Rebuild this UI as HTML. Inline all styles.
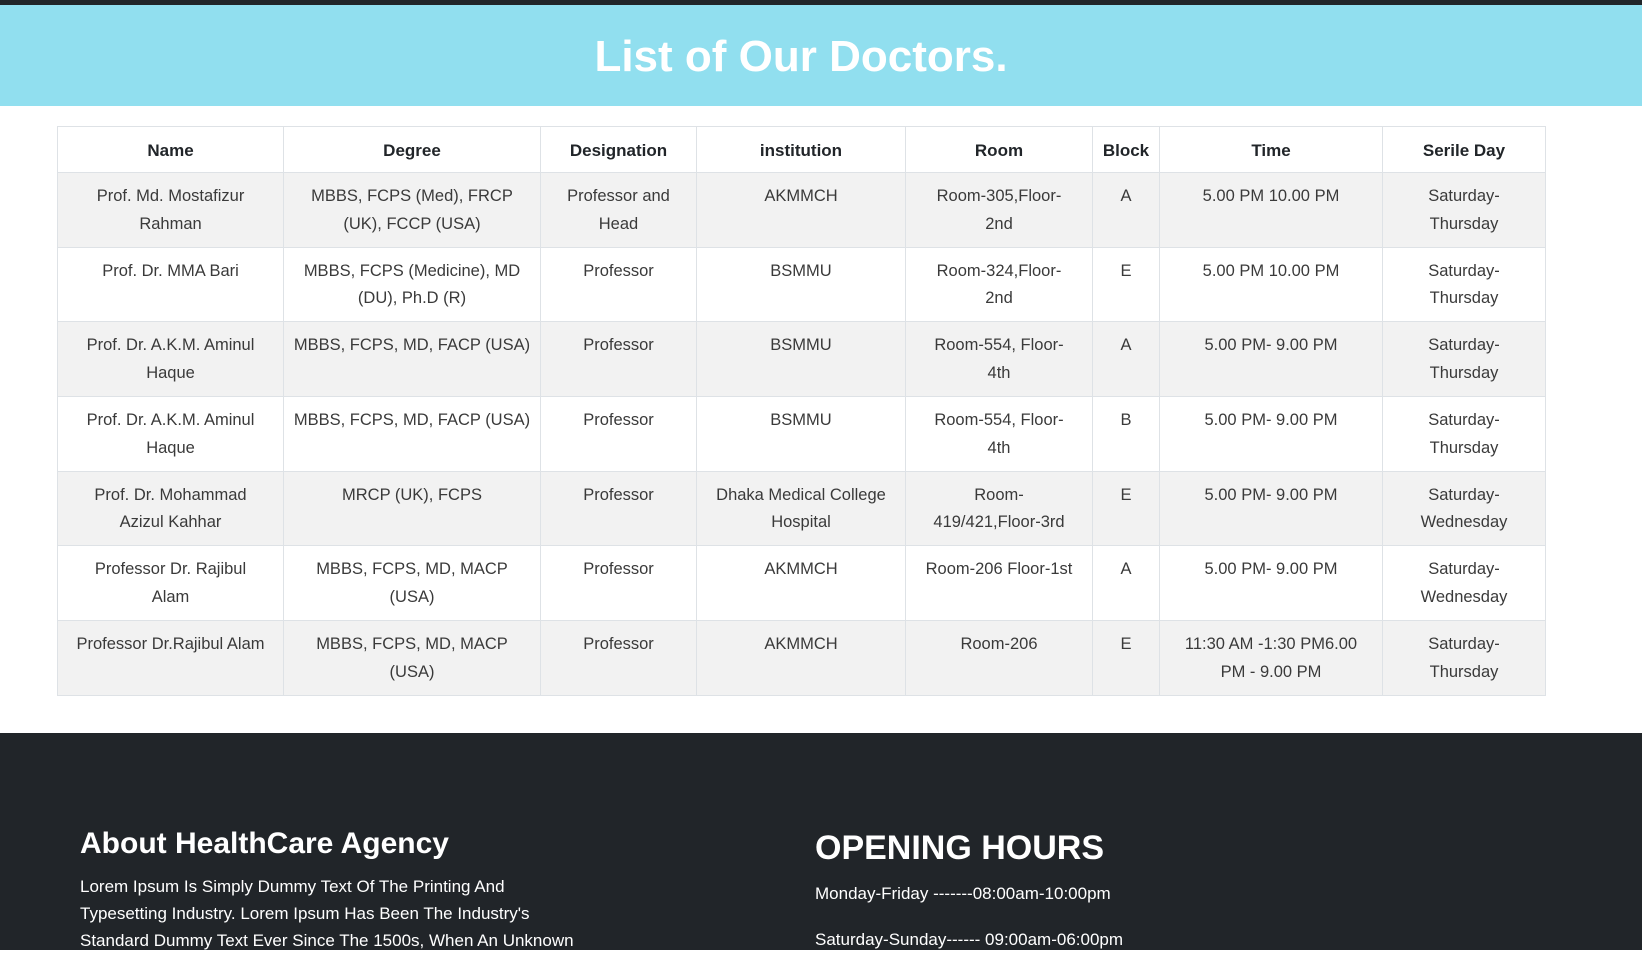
<!DOCTYPE html>
<html><head><meta charset="utf-8"><style>
*{margin:0;padding:0;box-sizing:border-box}
html,body{width:1642px;height:950px;overflow:hidden;background:#fff;font-family:"Liberation Sans",sans-serif}
.top{height:5px;background:#212529}
.band{height:101px;background:#91dfef;color:#fff;font-size:44px;line-height:104px;font-weight:bold;position:relative}
.band span{position:absolute;left:0;width:1602px;text-align:center}
table{position:absolute;left:57px;top:126px;width:1488px;border-collapse:collapse;table-layout:fixed}
td,th{border:1px solid #dee2e6;text-align:center;vertical-align:top;white-space:nowrap;font-size:16.5px;line-height:27.7px;color:#3a3a3a;padding:10px 0 0}
th{color:#212529;font-weight:bold;height:46px;vertical-align:middle;padding:2px 0 0;font-size:17px}
td{height:74.7px}
tbody tr:nth-child(odd){background:#f2f2f2}
.foot{position:absolute;left:0;top:733px;width:1642px;height:217px;background:#212529;color:#fff}
.h1{position:absolute;left:80px;top:94px;font-size:30px;font-weight:bold}
.h2{position:absolute;left:815px;top:96px;font-size:34px;font-weight:bold}
.p{position:absolute;left:80px;top:140px;font-size:17px;line-height:27px}
.q{position:absolute;left:815px;top:138px;font-size:17px;line-height:46px}
</style></head><body>
<div class="top"></div>
<div class="band"><span>List of Our Doctors.</span></div>
<table>
<colgroup><col style="width:226px"><col style="width:257px"><col style="width:156px"><col style="width:209px"><col style="width:187px"><col style="width:67px"><col style="width:223px"><col style="width:163px"></colgroup>
<thead><tr><th>Name</th><th>Degree</th><th>Designation</th><th>institution</th><th>Room</th><th>Block</th><th>Time</th><th>Serile Day</th></tr></thead>
<tbody>
<tr><td>Prof. Md. Mostafizur<br>Rahman</td><td>MBBS, FCPS (Med), FRCP<br>(UK), FCCP (USA)</td><td>Professor and<br>Head</td><td>AKMMCH</td><td>Room-305,Floor-<br>2nd</td><td>A</td><td>5.00 PM 10.00 PM</td><td>Saturday-<br>Thursday</td></tr>
<tr><td>Prof. Dr. MMA Bari</td><td>MBBS, FCPS (Medicine), MD<br>(DU), Ph.D (R)</td><td>Professor</td><td>BSMMU</td><td>Room-324,Floor-<br>2nd</td><td>E</td><td>5.00 PM 10.00 PM</td><td>Saturday-<br>Thursday</td></tr>
<tr><td>Prof. Dr. A.K.M. Aminul<br>Haque</td><td>MBBS, FCPS, MD, FACP (USA)</td><td>Professor</td><td>BSMMU</td><td>Room-554, Floor-<br>4th</td><td>A</td><td>5.00 PM- 9.00 PM</td><td>Saturday-<br>Thursday</td></tr>
<tr><td>Prof. Dr. A.K.M. Aminul<br>Haque</td><td>MBBS, FCPS, MD, FACP (USA)</td><td>Professor</td><td>BSMMU</td><td>Room-554, Floor-<br>4th</td><td>B</td><td>5.00 PM- 9.00 PM</td><td>Saturday-<br>Thursday</td></tr>
<tr><td>Prof. Dr. Mohammad<br>Azizul Kahhar</td><td>MRCP (UK), FCPS</td><td>Professor</td><td>Dhaka Medical College<br>Hospital</td><td>Room-<br>419/421,Floor-3rd</td><td>E</td><td>5.00 PM- 9.00 PM</td><td>Saturday-<br>Wednesday</td></tr>
<tr><td>Professor Dr. Rajibul<br>Alam</td><td>MBBS, FCPS, MD, MACP<br>(USA)</td><td>Professor</td><td>AKMMCH</td><td>Room-206 Floor-1st</td><td>A</td><td>5.00 PM- 9.00 PM</td><td>Saturday-<br>Wednesday</td></tr>
<tr><td>Professor Dr.Rajibul Alam</td><td>MBBS, FCPS, MD, MACP<br>(USA)</td><td>Professor</td><td>AKMMCH</td><td>Room-206</td><td>E</td><td>11:30 AM -1:30 PM6.00<br>PM - 9.00 PM</td><td>Saturday-<br>Thursday</td></tr>
</tbody></table>
<div class="foot">
<div class="h1">About HealthCare Agency</div>
<div class="h2">OPENING HOURS</div>
<div class="p">Lorem Ipsum Is Simply Dummy Text Of The Printing And<br>Typesetting Industry. Lorem Ipsum Has Been The Industry's<br>Standard Dummy Text Ever Since The 1500s, When An Unknown</div>
<div class="q">Monday-Friday -------08:00am-10:00pm<br>Saturday-Sunday------ 09:00am-06:00pm</div>
</div>
</body></html>
